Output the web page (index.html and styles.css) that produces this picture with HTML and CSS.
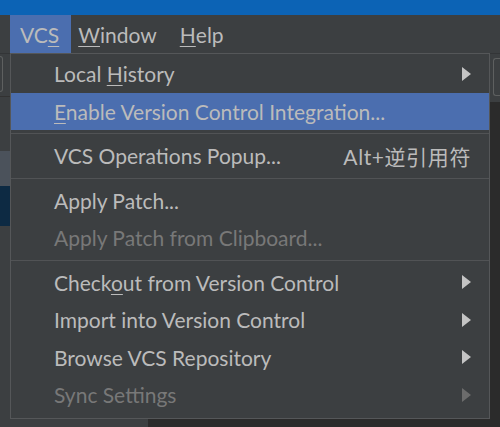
FILE: index.html
```html
<!DOCTYPE html>
<html>
<head>
<meta charset="utf-8">
<link rel="stylesheet" href="styles.css">
</head>
<body>
<div class="titlebar"></div>
<div class="menubar">
  <span class="mb-item active">VC<u>S</u></span>
  <span class="mb-item"><u>W</u>indow</span>
  <span class="mb-item"><u>H</u>elp</span>
</div>
<div class="workspace">
  <div class="leftpanel">
    <div class="lp-tools"><div class="lp-input"></div></div>
    <div class="lp-row"></div>
    <div class="lp-row sel"></div>
    <div class="lp-row focus"></div>
  </div>
  <div class="editor">
    <div class="ed-tools"><div class="ed-box"></div></div>
  </div>
</div>

<div class="popup">
  <div class="item"><span class="label">Local <u>H</u>istory</span><span class="arrow"></span></div>
  <div class="item hl"><span class="label"><u>E</u>nable Version Control Integration...</span></div>
  <div class="sep"></div>
  <div class="item"><span class="label">VCS Operations Popup...</span><span class="shortcut">Alt+逆引用符</span></div>
  <div class="sep"></div>
  <div class="item"><span class="label">Apply Patch...</span></div>
  <div class="item disabled"><span class="label">Apply Patch from Clipboard...</span></div>
  <div class="sep"></div>
  <div class="item"><span class="label">Check<u>o</u>ut from Version Control</span><span class="arrow"></span></div>
  <div class="item"><span class="label">Import into Version Control</span><span class="arrow"></span></div>
  <div class="item"><span class="label">Browse VCS Repository</span><span class="arrow"></span></div>
  <div class="item disabled"><span class="label">Sync Settings</span><span class="arrow"></span></div>
</div>
</body>
</html>
```

FILE: styles.css
```css
html, body {
  margin: 0;
  padding: 0;
}
body {
  width: 500px;
  height: 427px;
  overflow: hidden;
  position: relative;
  background: #2b2b2b;
  font-family: Lato, "Noto Sans CJK JP", sans-serif;
  font-size: 21px;
  color: #bbbbbb;
}
u {
  text-decoration: underline;
  text-underline-offset: 3px;
  text-decoration-thickness: 1px;
}
.titlebar {
  height: 15px;
  background: #0c63b5;
}
.menubar {
  height: 38px;
  background: #3c3f41;
  display: flex;
  padding-left: 10px;
  border-bottom: 1px solid #333537;
}
.mb-item {
  display: flex;
  align-items: center;
  padding: 1px 16px 0 7px;
  line-height: 37px;
}
.mb-item.active {
  background: #4b6eaf;
  padding: 1px 12px 0 10px;
}
.workspace {
  display: flex;
  height: 373px;
}
.leftpanel {
  width: 148px;
  background: #3c3f41;
  display: flex;
  flex-direction: column;
}
.lp-tools {
  height: 40px;
  padding-top: 2px;
  border-bottom: 1px solid #323232;
}
.lp-input {
  width: 2px;
  height: 34px;
  border: 1px solid #5e6060;
  border-left: none;
  border-radius: 0 3px 3px 0;
}
.lp-row {
  height: 54px;
}
.lp-row.sel {
  height: 35px;
  background: #4b525b;
}
.lp-row.focus {
  height: 40px;
  background: #0d2a43;
}
.editor {
  flex: 1;
  background: #2b2b2b;
}
.ed-tools {
  height: 44px;
  background: #3c3f41;
  display: flex;
  justify-content: flex-end;
  padding-top: 4px;
}
.ed-box {
  width: 6px;
  height: 36px;
  border: 1px solid #5e6060;
  border-right: none;
  border-radius: 3px 0 0 3px;
}
.popup {
  position: absolute;
  left: 10px;
  top: 53px;
  width: 478px;
  background: #3c3f41;
  border: 1px solid #555759;
  padding: 1px 0 4px 0;
}
.item {
  height: 37.5px;
  display: flex;
  align-items: center;
  padding: 0 18px 0 43px;
}
.item.hl {
  background: #4b6eaf;
}
.item.disabled {
  color: #787878;
}
.label {
  flex: 1;
  white-space: nowrap;
}
.shortcut {
  white-space: nowrap;
  letter-spacing: 0.6px;
}
.arrow {
  width: 0;
  height: 0;
  border-top: 7px solid transparent;
  border-bottom: 7px solid transparent;
  border-left: 9px solid #c4c4c4;
}
.item.disabled .arrow {
  border-left-color: #6c6c6c;
}
.sep {
  height: 7px;
  display: flex;
  align-items: center;
}
.sep::before {
  content: "";
  display: block;
  width: 100%;
  height: 1px;
  background: #515355;
}
```
